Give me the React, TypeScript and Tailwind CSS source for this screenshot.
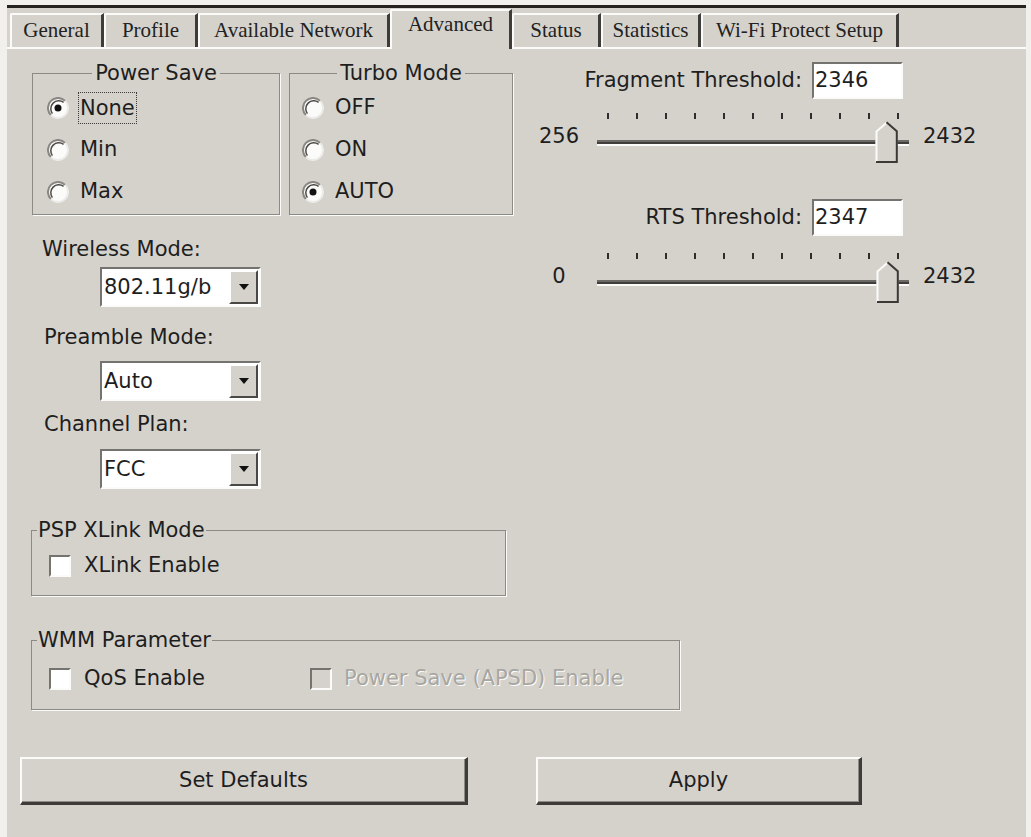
import React from "react";

const sunken =
  "border-2 border-t-[#75736f] border-l-[#75736f] border-r-[#fbfbfa] border-b-[#fbfbfa]";

const tabs = [
  { label: "General", w: "w-[94px]" },
  { label: "Profile", w: "w-[94px]" },
  { label: "Available Network", w: "w-[192px]" },
  { label: "Advanced", w: "w-[122px]", active: true },
  { label: "Status", w: "w-[89px]" },
  { label: "Statistics", w: "w-[100px]" },
  { label: "Wi-Fi Protect Setup", w: "w-[198px]" },
];

const Radio = ({ checked }: { checked?: boolean }) => (
  <svg width="22" height="22" viewBox="0 0 22 22" className="shrink-0">
    <circle cx="11" cy="11" r="10" fill="#fbfbfa" />
    <path d="M3.9 18.1 A10 10 0 0 1 18.1 3.9" fill="none" stroke="#8a8782" strokeWidth="2" />
    <path d="M5.4 16.6 A8 8 0 0 1 16.6 5.4" fill="none" stroke="#4c4a47" strokeWidth="1.5" />
    <path d="M18.1 3.9 A10 10 0 0 1 3.9 18.1" fill="none" stroke="#ecebe8" strokeWidth="2" />
    {checked && <circle cx="11" cy="11" r="3.5" fill="#111" />}
  </svg>
);

const Check = ({ disabled }: { disabled?: boolean }) => (
  <span
    className={`w-[22px] h-[22px] shrink-0 ${sunken} ${
      disabled ? "bg-[#d5d2cc]" : "bg-white"
    }`}
  />
);

const Combo = ({ value }: { value: string }) => (
  <div className={`ml-[68px] w-[161px] h-[40px] flex bg-white ${sunken}`}>
    <span className="flex-1 pl-[2px] leading-[36px]">{value}</span>
    <span className="w-[29px] my-[1px] mr-[1px] bg-[#d5d2cc] border-2 border-t-white border-l-white border-r-[#4a4845] border-b-[#4a4845] flex items-center justify-center">
      <svg width="10" height="6" viewBox="0 0 10 6">
        <path d="M0 0h10L5 6z" fill="#111" />
      </svg>
    </span>
  </div>
);

const Group = ({
  title,
  center,
  className,
  children,
}: {
  title: string;
  center?: boolean;
  className?: string;
  children: React.ReactNode;
}) => (
  <fieldset className={`border border-[#8c8a85] shadow-[1px_1px_0_#fbfbfa] ${className ?? ""}`}>
    <legend className={`leading-[24px] px-[1px] ${center ? "mx-auto px-[3px]" : "ml-[5px]"}`}>
      {title}
    </legend>
    {children}
  </fieldset>
);

const Slider = ({ min, max, value }: { min: number; max: number; value: number }) => {
  const pos = 20 + ((value - min) / (max - min)) * 290;
  return (
    <div className="flex items-start h-[52px]">
      <span className="w-[58px] text-center mt-[13px] leading-[24px]">{min}</span>
      <div className="relative w-[330px] h-[52px]">
        <div className="flex justify-between px-[19px] pt-[2px]">
          {Array.from({ length: 11 }).map((_, i) => (
            <span key={i} className="w-[2px] h-[6px] bg-[#2e2d2b]" />
          ))}
        </div>
        <div className="mx-[9px] mt-[21px] h-[6px] border-t-2 border-t-[#6c6a66] bg-[#3f3e3b] border-b-2 border-b-[#fbfbfa]" />
        <svg
          width="23"
          height="42"
          viewBox="0 0 23 42"
          className="absolute top-[10px]"
          style={{ left: pos - 11.5 }}
        >
          <path d="M0.5 10 L11.5 0.5 L22.5 10 V41.5 H0.5 Z" fill="#d5d2cc" />
          <path d="M1.5 41 V10.4 L11.5 1.8" fill="none" stroke="#fbfbfa" strokeWidth="2" />
          <path d="M11.5 1.2 L21.8 10.2 V41 H1" fill="none" stroke="#3a3936" strokeWidth="2" />
        </svg>
      </div>
      <span className="ml-[5px] mt-[13px] leading-[24px]">{max}</span>
    </div>
  );
};

export default function App() {
  return (
    <div className="w-[1031px] h-[837px] bg-[#f1f0ed] pl-[7px] pr-[5px] pt-[5px] overflow-hidden">
      <div className="h-full bg-[#d5d2cc] border-t-[3px] border-[#26231f] text-[21px] text-[#1e1e1e] font-['DejaVu_Sans',sans-serif]">
        {/* tab strip */}
        <div className="flex items-end h-[41px] pl-[3px] border-b-2 border-[#fbfbfa] font-['Liberation_Serif',serif] text-[#222]">
          {tabs.map((t) =>
            t.active ? (
              <div
                key={t.label}
                className={`${t.w} h-[40px] -mb-[2px] pb-[10px] bg-[#d5d2cc] border-t-2 border-l-2 border-[#fbfbfa] border-r-[3px] border-r-[#3e3c39] rounded-tl-[2px] flex items-center justify-center`}
              >
                {t.label}
              </div>
            ) : (
              <div
                key={t.label}
                className={`${t.w} h-[34px] border-t-2 border-l-2 border-[#fbfbfa] border-r-[3px] border-r-[#3e3c39] rounded-tl-[2px] flex items-center justify-center`}
              >
                {t.label}
              </div>
            )
          )}
        </div>

        <div className="flex pl-[25px]">
          {/* left column */}
          <div className="w-[481px] flex flex-col">
            <div className="flex gap-[9px] mt-[12px]">
              <Group title="Power Save" center className="w-[248px] pt-[2px] pb-[1px]">
                <div className="flex items-center h-[42px] pl-[14px]">
                  <Radio checked />
                  <span className="ml-[9px] px-[1px] leading-[30px] border border-dotted border-[#3a3a3a]">
                    None
                  </span>
                </div>
                <div className="flex items-center h-[42px] pl-[14px]">
                  <Radio />
                  <span className="ml-[11px]">Min</span>
                </div>
                <div className="flex items-center h-[42px] pl-[14px]">
                  <Radio />
                  <span className="ml-[11px]">Max</span>
                </div>
              </Group>
              <Group title="Turbo Mode" center className="w-[224px] pt-[2px] pb-[1px]">
                <div className="flex items-center h-[42px] pl-[12px]">
                  <Radio />
                  <span className="ml-[11px]">OFF</span>
                </div>
                <div className="flex items-center h-[42px] pl-[12px]">
                  <Radio />
                  <span className="ml-[11px]">ON</span>
                </div>
                <div className="flex items-center h-[42px] pl-[12px]">
                  <Radio checked />
                  <span className="ml-[11px]">AUTO</span>
                </div>
              </Group>
            </div>

            <span className="mt-[22px] pl-[10px] leading-[24px]">Wireless Mode:</span>
            <div className="mt-[6px]">
              <Combo value="802.11g/b" />
            </div>
            <span className="mt-[18px] pl-[12px] leading-[24px]">Preamble Mode:</span>
            <div className="mt-[12px]">
              <Combo value="Auto" />
            </div>
            <span className="mt-[11px] pl-[12px] leading-[24px]">Channel Plan:</span>
            <div className="mt-[13px]">
              <Combo value="FCC" />
            </div>
          </div>

          {/* threshold sliders */}
          <div className="ml-[17px] w-[460px] flex flex-col">
            <div className="mt-[13px] flex justify-end items-center gap-[10px] pr-[87px]">
              <span>Fragment Threshold:</span>
              <div className={`w-[91px] h-[37px] bg-white pl-[1px] leading-[33px] ${sunken}`}>2346</div>
            </div>
            <div className="mt-[12px]">
              <Slider min={256} max={2432} value={2346} />
            </div>
            <div className="mt-[36px] flex justify-end items-center gap-[10px] pr-[87px]">
              <span>RTS Threshold:</span>
              <div className={`w-[91px] h-[37px] bg-white pl-[1px] leading-[33px] ${sunken}`}>2347</div>
            </div>
            <div className="mt-[15px]">
              <Slider min={0} max={2432} value={2347} />
            </div>
          </div>
        </div>

        <div className="pl-[24px] flex flex-col items-start">
          <Group title="PSP XLink Mode" className="mt-[29px] w-[475px] pb-[7px]">
            <div className="mt-[2px] h-[44px] flex items-center pl-[17px]">
              <Check />
              <span className="ml-[13px]">XLink Enable</span>
            </div>
          </Group>

          <Group title="WMM Parameter" className="mt-[32px] w-[649px] pb-[8px]">
            <div className="mt-[5px] h-[44px] flex items-center pl-[17px]">
              <div className="w-[261px] flex items-center">
                <Check />
                <span className="ml-[13px]">QoS Enable</span>
              </div>
              <Check disabled />
              <span className="ml-[12px] text-[#a8a6a1] [text-shadow:1px_1px_0_#fbfbfa]">
                Power Save (APSD) Enable
              </span>
            </div>
          </Group>
        </div>

        <div className="mt-[47px] pl-[13px] flex gap-[68px]">
          <button className="w-[448px] h-[48px] bg-[#d5d2cc] border-t-2 border-l-2 border-[#fbfbfa] border-r-[3px] border-b-[3px] border-r-[#3e3c39] border-b-[#3e3c39] shadow-[inset_-1px_-1px_0_#8e8c87]">
            Set Defaults
          </button>
          <button className="w-[326px] h-[48px] bg-[#d5d2cc] border-t-2 border-l-2 border-[#fbfbfa] border-r-[3px] border-b-[3px] border-r-[#3e3c39] border-b-[#3e3c39] shadow-[inset_-1px_-1px_0_#8e8c87]">
            Apply
          </button>
        </div>
      </div>
    </div>
  );
}
